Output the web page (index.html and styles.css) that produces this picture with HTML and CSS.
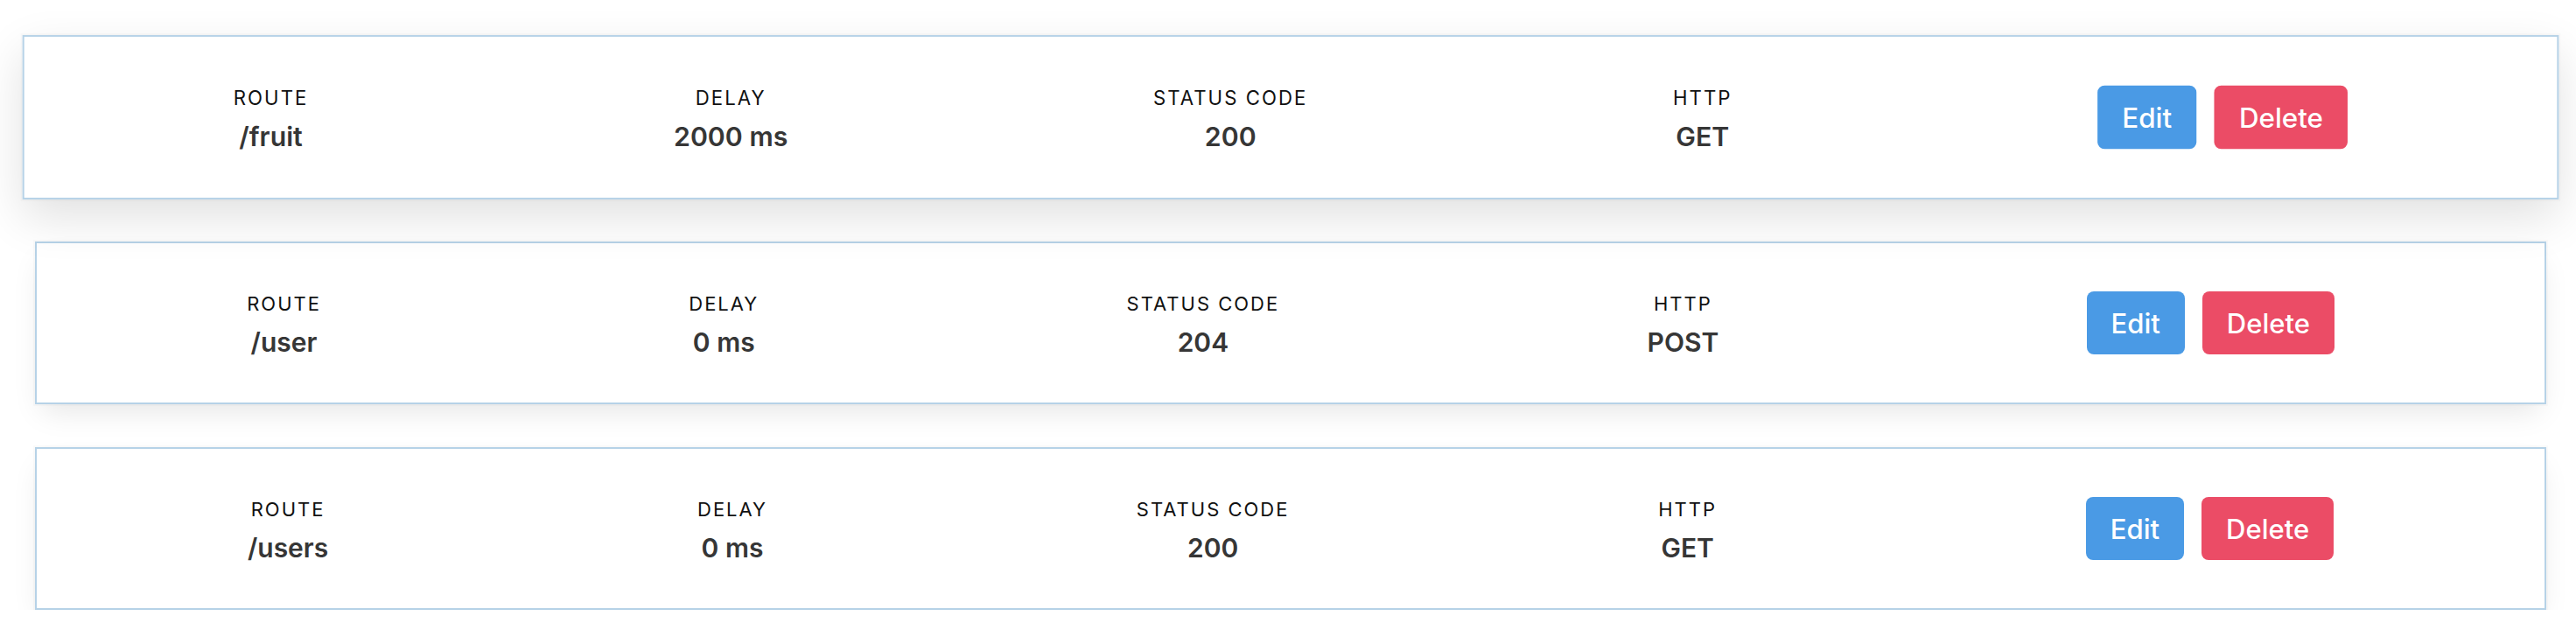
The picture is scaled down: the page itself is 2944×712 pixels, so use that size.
FILE: index.html
```html
<!DOCTYPE html>
<html lang="en">
<head>
<meta charset="utf-8">
<title>Routes</title>
<link rel="stylesheet" href="styles.css">
</head>
<body>
<main class="route-list">
  <div class="route-card is-hovered">
    <div class="route-item">
      <p class="heading">Route</p>
      <p class="value">/fruit</p>
    </div>
    <div class="route-item">
      <p class="heading">Delay</p>
      <p class="value">2000 ms</p>
    </div>
    <div class="route-item">
      <p class="heading">Status Code</p>
      <p class="value">200</p>
    </div>
    <div class="route-item">
      <p class="heading">HTTP</p>
      <p class="value">GET</p>
    </div>
    <div class="route-item actions">
      <button class="btn btn-edit">Edit</button>
      <button class="btn btn-delete">Delete</button>
    </div>
  </div>
  <div class="route-card">
    <div class="route-item">
      <p class="heading">Route</p>
      <p class="value">/user</p>
    </div>
    <div class="route-item">
      <p class="heading">Delay</p>
      <p class="value">0 ms</p>
    </div>
    <div class="route-item">
      <p class="heading">Status Code</p>
      <p class="value">204</p>
    </div>
    <div class="route-item">
      <p class="heading">HTTP</p>
      <p class="value">POST</p>
    </div>
    <div class="route-item actions">
      <button class="btn btn-edit">Edit</button>
      <button class="btn btn-delete">Delete</button>
    </div>
  </div>
  <div class="route-card">
    <div class="route-item">
      <p class="heading">Route</p>
      <p class="value">/users</p>
    </div>
    <div class="route-item">
      <p class="heading">Delay</p>
      <p class="value">0 ms</p>
    </div>
    <div class="route-item">
      <p class="heading">Status Code</p>
      <p class="value">200</p>
    </div>
    <div class="route-item">
      <p class="heading">HTTP</p>
      <p class="value">GET</p>
    </div>
    <div class="route-item actions">
      <button class="btn btn-edit">Edit</button>
      <button class="btn btn-delete">Delete</button>
    </div>
  </div>
</main>
</body>
</html>
```

FILE: styles.css
```css
html, body {
  margin: 0;
  padding: 0;
  background: #ffffff;
}

body {
  font-family: Inter, "Noto Sans", "Liberation Sans", sans-serif;
  color: #4a4a4a;
}

.route-list {
  display: flex;
  flex-direction: column;
  gap: 49px;
  padding: 41px 34px 0 40px;
}

.route-card {
  box-sizing: border-box;
  height: 186px;
  display: flex;
  align-items: center;
  padding: 0 42px;
  background: #ffffff;
  border: 2px solid #b6d2e7;
  box-shadow: 0 16px 32px -8px rgba(10, 10, 10, 0.10), 0 0 0 2px rgba(10, 10, 10, 0.02);
}

.route-card.is-hovered {
  transform: scale(1.01);
  box-shadow: 0 20px 50px 0 rgba(10, 10, 10, 0.12), 0 0 0 2px rgba(10, 10, 10, 0.02);
}

.route-item {
  flex: 1 1 auto;
  display: flex;
  flex-direction: column;
  align-items: center;
  margin-right: 24px;
}

.route-item:last-child {
  margin-right: 0;
}

.heading {
  margin: 0 0 10px;
  font-size: 22px;
  line-height: 33px;
  letter-spacing: 2px;
  text-transform: uppercase;
  color: #111111;
  font-weight: 400;
}

.value {
  margin: 0;
  font-size: 30px;
  line-height: 34px;
  font-weight: 600;
  color: #363636;
}

.actions {
  flex-direction: row;
  justify-content: center;
  gap: 20px;
}

.btn {
  box-sizing: border-box;
  height: 72px;
  padding: 0 28px;
  border: none;
  border-radius: 8px;
  font-family: inherit;
  font-size: 31px;
  font-weight: 500;
  color: #ffffff;
  cursor: pointer;
}

.btn-edit {
  background: #4a9ae5;
}

.btn-delete {
  background: #eb4c66;
}
```
